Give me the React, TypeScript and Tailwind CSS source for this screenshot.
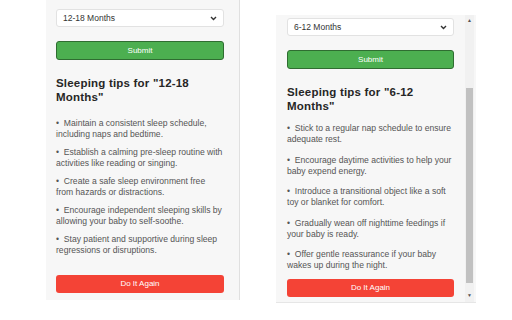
import React from "react";

const leftTips = [
  "Maintain a consistent sleep schedule, including naps and bedtime.",
  "Establish a calming pre-sleep routine with activities like reading or singing.",
  "Create a safe sleep environment free from hazards or distractions.",
  "Encourage independent sleeping skills by allowing your baby to self-soothe.",
  "Stay patient and supportive during sleep regressions or disruptions.",
];

const rightTips = [
  "Stick to a regular nap schedule to ensure adequate rest.",
  "Encourage daytime activities to help your baby expend energy.",
  "Introduce a transitional object like a soft toy or blanket for comfort.",
  "Gradually wean off nighttime feedings if your baby is ready.",
  "Offer gentle reassurance if your baby wakes up during the night.",
];

const Chevron = () => (
  <svg width="7" height="5" viewBox="0 0 7 5" className="text-[#333]">
    <path d="M1 1 L3.5 3.5 L6 1" stroke="currentColor" strokeWidth="1.4" fill="none" />
  </svg>
);

interface PanelProps {
  age: string;
  tips: string[];
  headMt: string;
  listMt: string;
  gap: string;
  againMt: string;
}

// one popup body: select, submit, heading, tips, restart
const Panel: React.FC<PanelProps> = ({ age, tips, headMt, listMt, gap, againMt }) => (
  <div className="w-full">
    <div className="h-[18px] flex items-center justify-between px-[6px] bg-white border border-[#e2e2e2] rounded-[3px] text-[8.5px] text-[#333]">
      <span>{age}</span>
      <Chevron />
    </div>
    <button className="mt-[14px] w-full h-[19px] bg-[#4caf50] border border-[#2f6d31] rounded-[3px] text-white text-[8px]">
      Submit
    </button>
    <h2 className={`${headMt} text-[11.5px] leading-[14px] font-bold text-[#262626] tracking-[0.2px]`}>
      {`Sleeping tips for "${age}"`}
    </h2>
    <ul className={`${listMt} flex flex-col ${gap}`}>
      {tips.map((t) => (
        <li key={t} className="text-[8.6px] leading-[11px] text-[#555] whitespace-pre-wrap">
          {"•  " + t}
        </li>
      ))}
    </ul>
    <button className={`${againMt} w-full h-[18px] bg-[#f44336] rounded-[3px] text-white text-[8px]`}>
      Do It Again
    </button>
  </div>
);

export default function App() {
  return (
    <div
      className="w-[512px] h-[320px] bg-white flex items-start overflow-hidden"
      style={{ fontFamily: "'Liberation Sans', Arial, sans-serif" }}
    >
      {/* left window, scrolled so its top is cut off */}
      <div className="ml-[46px] w-[194px] h-[300px] bg-[#f7f7f7] border-r border-[#e0e0e0] overflow-hidden pl-[10px] pr-[15px]">
        <div className="mt-[9px]">
          <Panel
            age="12-18 Months"
            tips={leftTips}
            headMt="mt-[16px]"
            listMt="mt-[14px]"
            gap="gap-[7px]"
            againMt="mt-[19px]"
          />
        </div>
      </div>

      {/* right window with scrollbar */}
      <div className="ml-[36px] mt-[15px] w-[200px] h-[288px] bg-[#f7f7f7] border-b border-[#e6e6e6] flex">
        <div className="flex-1 pl-[11px] pr-[11px] pt-[3px] overflow-hidden">
          <Panel
            age="6-12 Months"
            tips={rightTips}
            headMt="mt-[16px]"
            listMt="mt-[10px]"
            gap="gap-[9.5px]"
            againMt="mt-[8px]"
          />
        </div>
        <div className="w-[9px] h-full bg-[#f1f1f1] flex flex-col items-center mr-[2px]">
          <div className="h-[12px] flex items-center text-[#555] text-[5px]">▲</div>
          <div className="mt-[61px] w-[7px] h-[195px] bg-[#c1c1c1]" />
          <div className="flex-1" />
          <div className="h-[12px] flex items-center text-[#555] text-[5px]">▼</div>
        </div>
      </div>
    </div>
  );
}
